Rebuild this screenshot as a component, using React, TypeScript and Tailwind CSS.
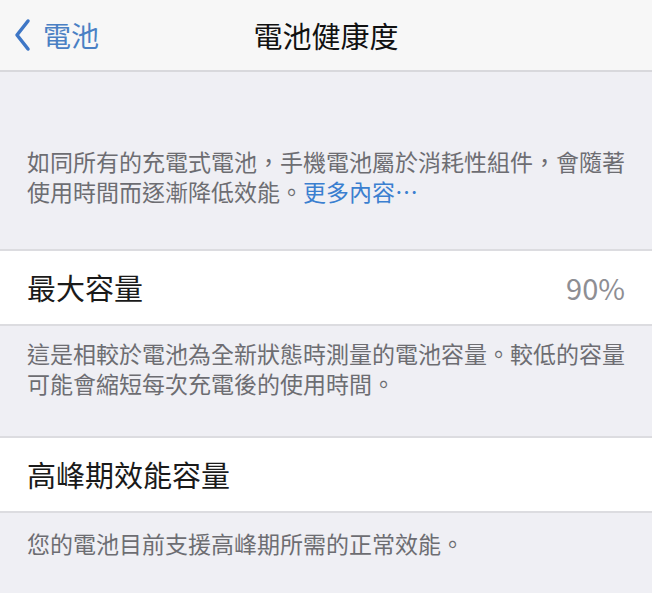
import React from 'react';

const font = { fontFamily: '"Noto Sans CJK TC", "Noto Sans", sans-serif' };

function NavBar() {
  return (
    <div className="grid h-[72px] grid-cols-[1fr_auto_1fr] items-center border-b-2 border-[#d8d8dc] bg-[#f7f7f7]">
      <div className="flex items-center pl-[13px]">
        <svg width="20" height="34" viewBox="0 0 20 34" fill="none" className="mr-[10px]">
          <path d="M15 3 L4 17 L15 31" stroke="#3e77c6" strokeWidth="3.5" strokeLinecap="round" strokeLinejoin="round" />
        </svg>
        <span className="text-[28px] leading-none text-[#4a80c4]">電池</span>
      </div>
      <div className="text-[29px] leading-none text-[#111]">電池健康度</div>
      <div />
    </div>
  );
}

function Footer({ lines, className }: { lines: React.ReactNode[]; className: string }) {
  return (
    <div className={`px-[27px] text-[23px] leading-[30px] text-[#6d6d72] ${className}`}>
      {lines.map((line, i) => (
        <div key={i} className="whitespace-nowrap">
          {line}
        </div>
      ))}
    </div>
  );
}

function Row({ label, value }: { label: string; value?: string }) {
  return (
    <div className="flex h-[77px] items-center justify-between border-y-2 border-[#dcdce0] bg-white px-[27px]">
      <span className="text-[29px] text-[#1a1a1a]">{label}</span>
      {value && <span className="text-[29px] text-[#8e8e93]">{value}</span>}
    </div>
  );
}

export default function App() {
  return (
    <div className="h-[593px] w-[652px] overflow-hidden bg-[#efeff4]" style={font}>
      <NavBar />
      <Footer
        className="pb-[43px] pt-[74px]"
        lines={[
          '如同所有的充電式電池，手機電池屬於消耗性組件，會隨著',
          <>
            使用時間而逐漸降低效能。<span className="text-[#3b7fd0]">更多內容⋯</span>
          </>,
        ]}
      />
      <Row label="最大容量" value="90%" />
      <Footer
        className="pb-[38px] pt-[12px]"
        lines={['這是相較於電池為全新狀態時測量的電池容量。較低的容量', '可能會縮短每次充電後的使用時間。']}
      />
      <Row label="高峰期效能容量" />
      <Footer className="pt-[15px]" lines={['您的電池目前支援高峰期所需的正常效能。']} />
    </div>
  );
}
